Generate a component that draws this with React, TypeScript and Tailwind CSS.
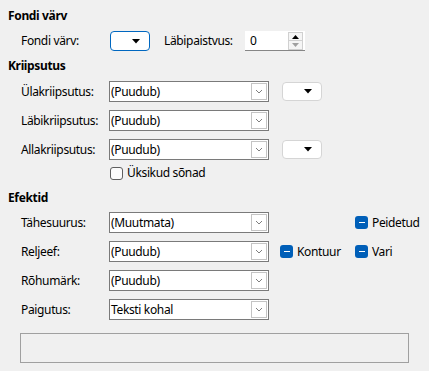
import React from 'react';

const FONT = { fontFamily: '"Segoe UI", "Noto Sans", "Open Sans", sans-serif' };

function Caret({ color = '#000' }: { color?: string }): React.JSX.Element {
  return (
    <svg width="8" height="5" viewBox="0 0 8 5" aria-hidden="true">
      <path d="M0 0 H8 L4 4.5 Z" fill={color} />
    </svg>
  );
}

function Chevron(): React.JSX.Element {
  return (
    <svg width="8" height="5" viewBox="0 0 8 5" aria-hidden="true">
      <path d="M1 1 L4 4 L7 1" fill="none" stroke="#707070" strokeWidth="0.9" />
    </svg>
  );
}

function ComboBox({ value }: { value: string }): React.JSX.Element {
  return (
    <div className="flex h-[21px] w-[160px] items-stretch border border-[#7a7a7a] bg-white">
      <span className="flex flex-1 items-center pl-[1px] text-[12px] text-black">{value}</span>
      <span className="m-[1px] flex w-[16px] items-center justify-center border border-[#c4c4c4] bg-white">
        <Chevron />
      </span>
    </div>
  );
}

function ColorButton({ focused = false }: { focused?: boolean }): React.JSX.Element {
  return (
    <div
      className={[
        'flex items-center justify-end rounded-[4px] bg-white pr-[9px]',
        focused ? 'h-[20px] w-[40px] border border-[#0067c0]' : 'h-[19px] w-[40px] border border-[#d5d5d5]',
      ].join(' ')}
    >
      <Caret />
    </div>
  );
}

function BlueCheck({ label }: { label: string }): React.JSX.Element {
  return (
    <div className="flex items-center gap-[4px]">
      <span className="flex h-[13px] w-[13px] items-center justify-center rounded-[3px] bg-[#005fb8]">
        <span className="h-[1.5px] w-[6px] bg-white" />
      </span>
      <span className="text-[12px] text-black">{label}</span>
    </div>
  );
}

function Heading({ children, mt }: { children: React.ReactNode; mt: string }): React.JSX.Element {
  return (
    <div className={`flex h-[16px] items-center pl-[8px] text-[12px] font-bold text-black ${mt}`}>{children}</div>
  );
}

function Row({ label, children, mt }: { label: string; children: React.ReactNode; mt: string }): React.JSX.Element {
  return (
    <div className={`flex h-[21px] items-center pl-[21px] ${mt}`}>
      <span className="w-[88px] text-[12px] text-black">{label}</span>
      {children}
    </div>
  );
}

export default function App(): React.JSX.Element {
  return (
    <div
      className="flex h-[371px] w-[429px] flex-col bg-[#f0f0f0] leading-none tracking-[-0.35px]"
      style={FONT}
    >
      <Heading mt="mt-[8px]">Fondi värv</Heading>

      {/* font colour + transparency */}
      <div className="mt-[7px] flex h-[20px] items-center pl-[21px]">
        <span className="w-[89px] text-[12px] text-black">Fondi värv:</span>
        <ColorButton focused />
        <span className="ml-[14px] w-[81px] text-[12px] text-black">Läbipaistvus:</span>
        <div className="flex h-[20px] w-[60px] items-stretch border-b border-[#868686] bg-white">
          <span className="flex flex-1 items-center pl-[5px] text-[12px] text-black">0</span>
          <span className="mr-[2px] mt-[1px] flex w-[15px] flex-col">
            <span className="flex h-[9px] items-center justify-center border border-[#d0d0d0] bg-[#f5f5f5]">
              <svg width="7" height="4" viewBox="0 0 7 4"><path d="M0 4 H7 L3.5 0 Z" fill="#000" /></svg>
            </span>
            <span className="flex h-[9px] items-center justify-center border border-t-0 border-[#d0d0d0] bg-[#f5f5f5]">
              <svg width="7" height="4" viewBox="0 0 7 4"><path d="M0 0 H7 L3.5 4 Z" fill="#a0a0a0" /></svg>
            </span>
          </span>
        </div>
      </div>

      <Heading mt="mt-[7px]">Kriipsutus</Heading>
      <Row label="Ülakriipsutus:" mt="mt-[7px]">
        <ComboBox value="(Puudub)" />
        <div className="ml-[13px]">
          <ColorButton />
        </div>
      </Row>
      <Row label="Läbikriipsutus:" mt="mt-[8px]">
        <ComboBox value="(Puudub)" />
      </Row>
      <Row label="Allakriipsutus:" mt="mt-[8px]">
        <ComboBox value="(Puudub)" />
        <div className="ml-[13px]">
          <ColorButton />
        </div>
      </Row>
      <div className="mt-[6px] flex h-[14px] items-center gap-[4px] pl-[110px]">
        <span className="h-[13px] w-[13px] rounded-[3px] border border-[#5f5f5f] bg-[#fbfbfb]" />
        <span className="text-[12px] text-black">Üksikud sõnad</span>
      </div>

      <Heading mt="mt-[10px]">Efektid</Heading>
      <Row label="Tähesuurus:" mt="mt-[6px]">
        <ComboBox value="(Muutmata)" />
        <div className="ml-[86px]">
          <BlueCheck label="Peidetud" />
        </div>
      </Row>
      <Row label="Reljeef:" mt="mt-[8px]">
        <ComboBox value="(Puudub)" />
        <div className="ml-[11px] w-[75px]">
          <BlueCheck label="Kontuur" />
        </div>
        <BlueCheck label="Vari" />
      </Row>
      <Row label="Rõhumärk:" mt="mt-[8px]">
        <ComboBox value="(Puudub)" />
      </Row>
      <Row label="Paigutus:" mt="mt-[8px]">
        <ComboBox value="Teksti kohal" />
      </Row>

      {/* preview */}
      <div className="ml-[20px] mt-[13px] h-[30px] w-[389px] border border-[#a0a0a0] bg-[#f0f0f0]" />
    </div>
  );
}
